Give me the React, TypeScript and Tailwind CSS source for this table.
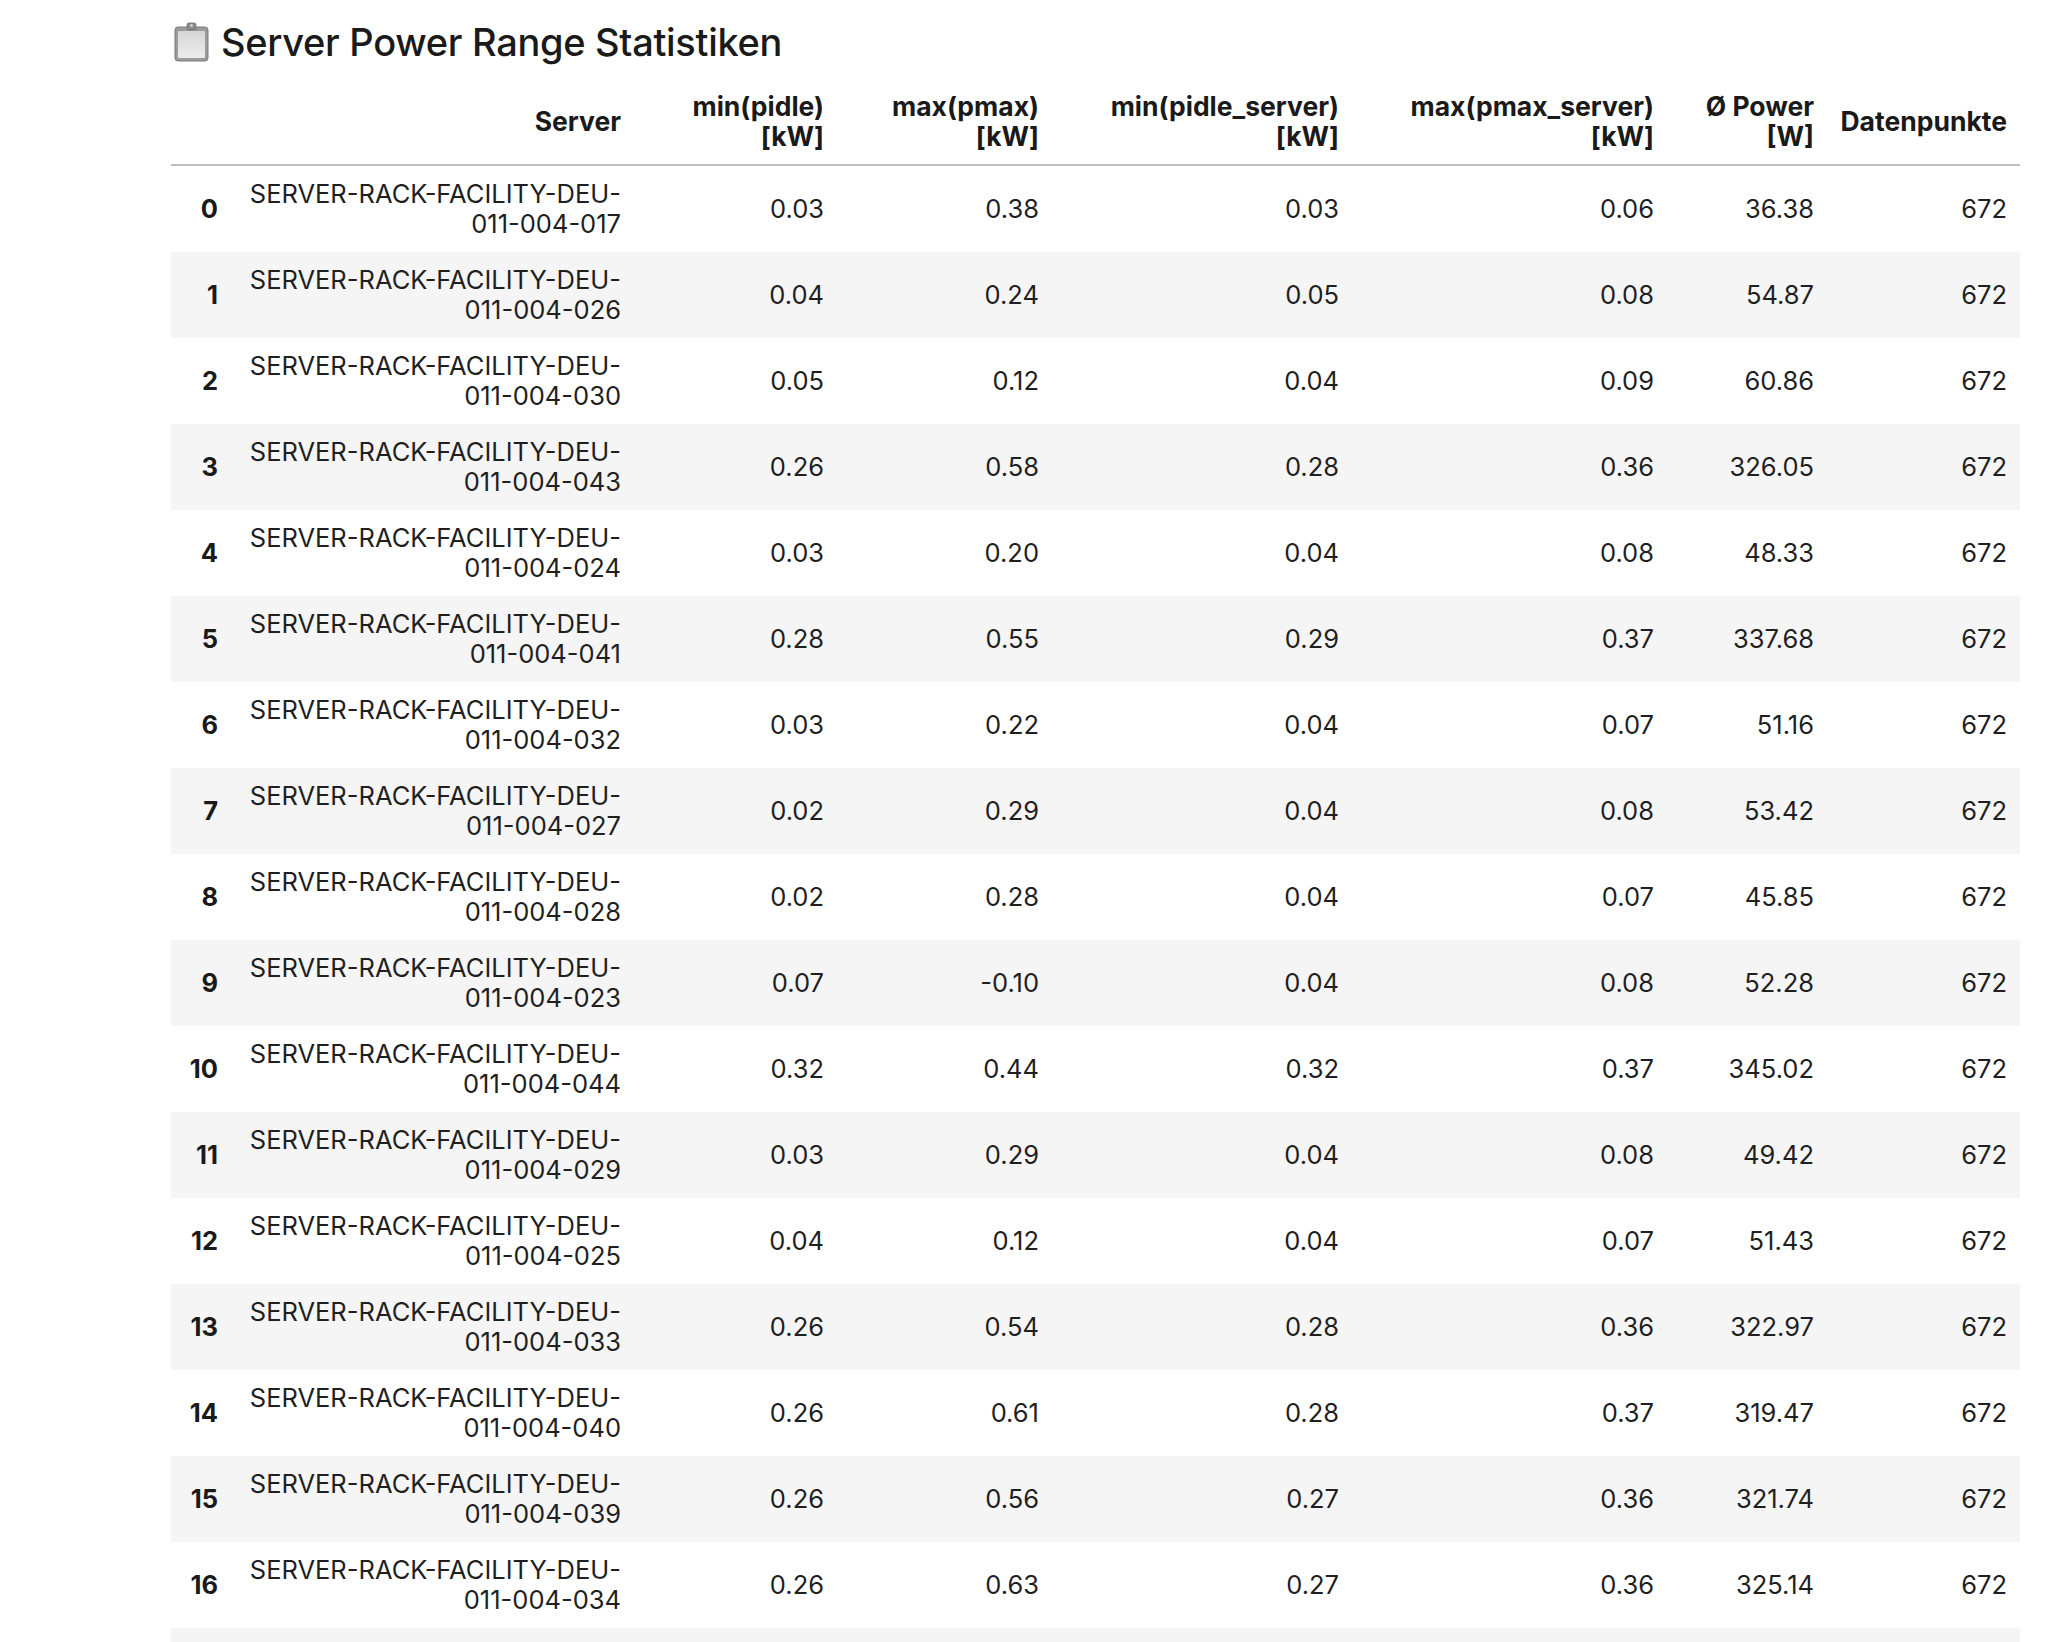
import React from "react";

type Row = [string, string, string, string, string, string, string];

const rows: Row[] = [
  ["017", "0.03", "0.38", "0.03", "0.06", "36.38", "672"],
  ["026", "0.04", "0.24", "0.05", "0.08", "54.87", "672"],
  ["030", "0.05", "0.12", "0.04", "0.09", "60.86", "672"],
  ["043", "0.26", "0.58", "0.28", "0.36", "326.05", "672"],
  ["024", "0.03", "0.20", "0.04", "0.08", "48.33", "672"],
  ["041", "0.28", "0.55", "0.29", "0.37", "337.68", "672"],
  ["032", "0.03", "0.22", "0.04", "0.07", "51.16", "672"],
  ["027", "0.02", "0.29", "0.04", "0.08", "53.42", "672"],
  ["028", "0.02", "0.28", "0.04", "0.07", "45.85", "672"],
  ["023", "0.07", "-0.10", "0.04", "0.08", "52.28", "672"],
  ["044", "0.32", "0.44", "0.32", "0.37", "345.02", "672"],
  ["029", "0.03", "0.29", "0.04", "0.08", "49.42", "672"],
  ["025", "0.04", "0.12", "0.04", "0.07", "51.43", "672"],
  ["033", "0.26", "0.54", "0.28", "0.36", "322.97", "672"],
  ["040", "0.26", "0.61", "0.28", "0.37", "319.47", "672"],
  ["039", "0.26", "0.56", "0.27", "0.36", "321.74", "672"],
  ["034", "0.26", "0.63", "0.27", "0.36", "325.14", "672"],
];

function ClipboardIcon() {
  return (
    <svg width="40" height="42" viewBox="0 0 40 42" aria-hidden="true">
      <defs>
        <linearGradient id="paper" x1="0" y1="0" x2="0" y2="1">
          <stop offset="0" stopColor="#d6d6d6" />
          <stop offset="1" stopColor="#ececec" />
        </linearGradient>
      </defs>
      <rect x="4" y="6" width="33" height="34" rx="3" fill="#9b9b9b" stroke="#7c7c7c" strokeWidth="1" />
      <rect x="7" y="10" width="27" height="27" rx="1" fill="url(#paper)" />
      <rect x="16" y="2" width="9" height="7" rx="2" fill="#8a8a8a" stroke="#6f6f6f" strokeWidth="0.8" />
      <circle cx="20.5" cy="4.5" r="1.4" fill="#d0d0d0" />
    </svg>
  );
}

const headers: { l1: string; l2?: string }[] = [
  { l1: "Server" },
  { l1: "min(pidle)", l2: "[kW]" },
  { l1: "max(pmax)", l2: "[kW]" },
  { l1: "min(pidle_server)", l2: "[kW]" },
  { l1: "max(pmax_server)", l2: "[kW]" },
  { l1: "Ø Power", l2: "[W]" },
  { l1: "Datenpunkte" },
];

export default function App() {
  return (
    <div
      className="w-[2048px] h-[1642px] overflow-hidden bg-white text-[#1f1f1f] pl-[171px] pt-[12px]"
      style={{ fontFamily: "Inter, 'Noto Sans', sans-serif" }}
    >
      <div className="flex items-center h-[60px] gap-[10px]">
        <ClipboardIcon />
        <h3 className="text-[38px] font-medium tracking-[-0.3px] text-[#1a1a1a]">
          Server Power Range Statistiken
        </h3>
      </div>
      <table className="mt-[6px] w-[1849px] table-fixed border-collapse text-[25.5px] leading-[30px]">
        <colgroup>
          <col className="w-[60px]" />
          <col className="w-[403px]" />
          <col className="w-[203px]" />
          <col className="w-[215px]" />
          <col className="w-[300px]" />
          <col className="w-[315px]" />
          <col className="w-[160px]" />
          <col className="w-[193px]" />
        </colgroup>
        <thead>
          <tr className="border-b-2 border-[#bdbdbd]">
            <th className="px-[13px] py-[13px]"></th>
            {headers.map((h) => (
              <th
                key={h.l1}
                className="px-[13px] py-[13px] text-right align-middle font-bold text-[26.5px] text-[#1a1a1a]"
              >
                {h.l1}
                {h.l2 ? (
                  <>
                    <br />
                    {h.l2}
                  </>
                ) : null}
              </th>
            ))}
          </tr>
        </thead>
        <tbody>
          {rows.map((r, i) => (
            <tr key={i} className={i % 2 === 1 ? "bg-[#f5f5f5]" : "bg-white"}>
              <th className="px-[13px] py-[13px] text-right align-middle font-bold text-[#1a1a1a]">
                {i}
              </th>
              <td className="px-[13px] py-[13px] text-right align-middle">
                SERVER-RACK-FACILITY-DEU-
                <br />
                011-004-{r[0]}
              </td>
              {r.slice(1).map((v, j) => (
                <td key={j} className="px-[13px] py-[13px] text-right align-middle">
                  {v}
                </td>
              ))}
            </tr>
          ))}
          <tr className="bg-[#f5f5f5] h-[86px]">
            <th className="px-[13px] py-[13px]"></th>
            <td className="px-[13px] py-[13px]"></td>
            <td className="px-[13px] py-[13px]"></td>
            <td className="px-[13px] py-[13px]"></td>
            <td className="px-[13px] py-[13px]"></td>
            <td className="px-[13px] py-[13px]"></td>
            <td className="px-[13px] py-[13px]"></td>
            <td className="px-[13px] py-[13px]"></td>
          </tr>
        </tbody>
      </table>
    </div>
  );
}
